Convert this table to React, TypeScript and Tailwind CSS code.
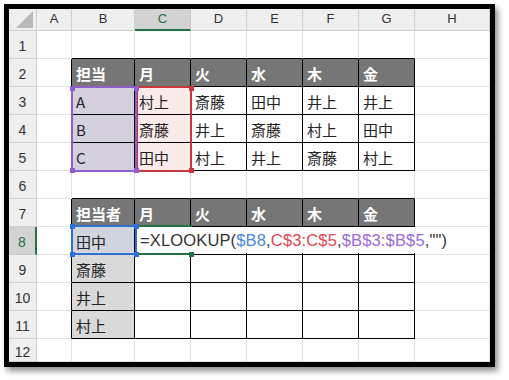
import React from 'react';

const COLS = ['A', 'B', 'C', 'D', 'E', 'F', 'G', 'H'];

const data: Record<string, string> = {
  '2-1': '担当', '2-2': '月', '2-3': '火', '2-4': '水', '2-5': '木', '2-6': '金',
  '3-1': 'A', '3-2': '村上', '3-3': '斎藤', '3-4': '田中', '3-5': '井上', '3-6': '井上',
  '4-1': 'B', '4-2': '斎藤', '4-3': '井上', '4-4': '斎藤', '4-5': '村上', '4-6': '田中',
  '5-1': 'C', '5-2': '田中', '5-3': '村上', '5-4': '井上', '5-5': '斎藤', '5-6': '村上',
  '7-1': '担当者', '7-2': '月', '7-3': '火', '7-4': '水', '7-5': '木', '7-6': '金',
  '8-1': '田中', '9-1': '斎藤', '10-1': '井上', '11-1': '村上',
};

function inTable(r: number, c: number) {
  return c >= 1 && c <= 6 && ((r >= 2 && r <= 5) || (r >= 7 && r <= 11));
}

function bgFor(r: number, c: number) {
  if ((r === 2 || r === 7) && c >= 1 && c <= 6) return 'bg-[#767676] text-white font-bold';
  if (c === 1 && r >= 3 && r <= 5) return 'bg-[#d4d1dc] text-[#222]';
  if (c === 2 && r >= 3 && r <= 5) return 'bg-[#fbeaea] text-[#222]';
  if (c === 1 && r === 8) return 'bg-[#d1d5de] text-[#222]';
  if (c === 1 && r >= 9 && r <= 11) return 'bg-[#d9d9d9] text-[#222]';
  return 'bg-white text-[#222]';
}

function Cell({ r, c }: { r: number; c: number }) {
  const rightBlack = inTable(r, c) || inTable(r, c + 1);
  const bottomBlack = inTable(r, c) || inTable(r + 1, c);
  const rc = rightBlack ? 'border-r-black' : 'border-r-[#e1e1e1]';
  const bc = bottomBlack ? 'border-b-black' : 'border-b-[#e1e1e1]';
  const text = data[`${r}-${c}`];
  return (
    <div
      className={`border-r border-b ${rc} ${bc} ${bgFor(r, c)} flex items-center pl-[4px] pt-[2px] text-[15px] leading-none whitespace-nowrap overflow-hidden`}
      style={{ fontFamily: '"Noto Sans CJK JP", "Noto Sans", sans-serif' }}
    >
      {text}
    </div>
  );
}

function Handle({ x, y, color }: { x: number; y: number; color: string }) {
  return (
    <div
      className="absolute w-[5px] h-[5px]"
      style={{ left: x - 2.5, top: y - 2.5, backgroundColor: color }}
    />
  );
}

export default function App() {
  const rows = Array.from({ length: 12 }, (_, i) => i + 1);
  const hdrFont = { fontFamily: '"Liberation Sans", Arial, sans-serif' };
  return (
    <div className="w-[509px] h-[380px] bg-white pt-[4px] pl-[4px]">
      <div className="w-[491px] h-[363px] border-[5px] border-black shadow-[3px_4px_6px_rgba(0,0,0,0.45)] bg-white overflow-hidden">
        <div className="relative grid grid-cols-[28px_35px_63px_56px_56px_56px_56px_56px_75px] grid-rows-[22px_repeat(11,28px)_23px] w-[481px] h-[353px]">
          {/* corner */}
          <div className="bg-[#efefef] border-r border-b border-[#d0d0d0] relative">
            <svg width="28" height="22" className="absolute left-0 top-0">
              <polygon points="7,19 24,2 24,19" fill="#b9b9b9" />
            </svg>
          </div>
          {COLS.map((l, i) =>
            i === 2 ? (
              <div
                key={l}
                className="bg-[#d3d3d3] border-r border-r-[#c8c8c8] border-b-2 border-b-[#217346] flex justify-center pt-[3px] text-[13px] leading-none text-[#217346]"
                style={hdrFont}
              >
                {l}
              </div>
            ) : (
              <div
                key={l}
                className="bg-[#efefef] border-r border-b border-[#d0d0d0] flex justify-center pt-[3px] text-[13px] leading-none text-[#333]"
                style={hdrFont}
              >
                {l}
              </div>
            )
          )}
          {rows.map((r) => (
            <React.Fragment key={r}>
              {r === 8 ? (
                <div
                  className="bg-[#d3d3d3] border-r-2 border-r-[#217346] border-b border-b-[#c8c8c8] flex items-center justify-center pt-[3px] text-[14px] leading-none text-[#217346]"
                  style={hdrFont}
                >
                  {r}
                </div>
              ) : (
                <div
                  className="bg-[#efefef] border-r border-b border-[#d0d0d0] flex items-center justify-center pt-[3px] text-[14px] leading-none text-[#333]"
                  style={hdrFont}
                >
                  {r}
                </div>
              )}
              {COLS.map((_, c) => (
                <Cell key={c} r={r} c={c} />
              ))}
            </React.Fragment>
          ))}

          {/* formula editor in C8 */}
          <div
            className="absolute left-[129px] top-[218px] w-[316px] h-[26px] bg-white flex items-center pl-[2px] pt-[1px] text-[16.5px] tracking-[0.15px] leading-none whitespace-nowrap text-[#333]"
            style={hdrFont}
          >
            <span>=XLOOKUP(</span>
            <span className="text-[#4a86e0]">$B8</span>
            <span>,</span>
            <span className="text-[#e0474c]">C$3:C$5</span>
            <span>,</span>
            <span className="text-[#9b6bd6]">$B$3:$B$5</span>
            <span>,"")</span>
          </div>

          {/* active cell green lines */}
          <div className="absolute left-[127px] top-[216px] w-[56px] h-[30px] border-t-2 border-b-2 border-[#217346]" />

          {/* red reference box */}
          <div className="absolute left-[127px] top-[77px] w-[56px] h-[86px] border-2 border-[#c8373f]" />
          {/* purple reference box */}
          <div className="absolute left-[62px] top-[77px] w-[66px] h-[86px] border-2 border-[#8f5fd0]" />
          {/* blue reference box */}
          <div className="absolute left-[62px] top-[216px] w-[66px] h-[30px] border-2 border-[#2f70d8]" />

          <Handle x={182} y={79} color="#c8373f" />
          <Handle x={182} y={161} color="#c8373f" />
          <Handle x={63} y={79} color="#8f5fd0" />
          <Handle x={127} y={79} color="#8f5fd0" />
          <Handle x={63} y={161} color="#8f5fd0" />
          <Handle x={127} y={161} color="#8f5fd0" />
          <Handle x={63} y={217} color="#2f70d8" />
          <Handle x={127} y={217} color="#2f70d8" />
          <Handle x={63} y={245} color="#2f70d8" />
          <Handle x={127} y={245} color="#2f70d8" />
          <Handle x={182} y={245} color="#217346" />
        </div>
      </div>
    </div>
  );
}
